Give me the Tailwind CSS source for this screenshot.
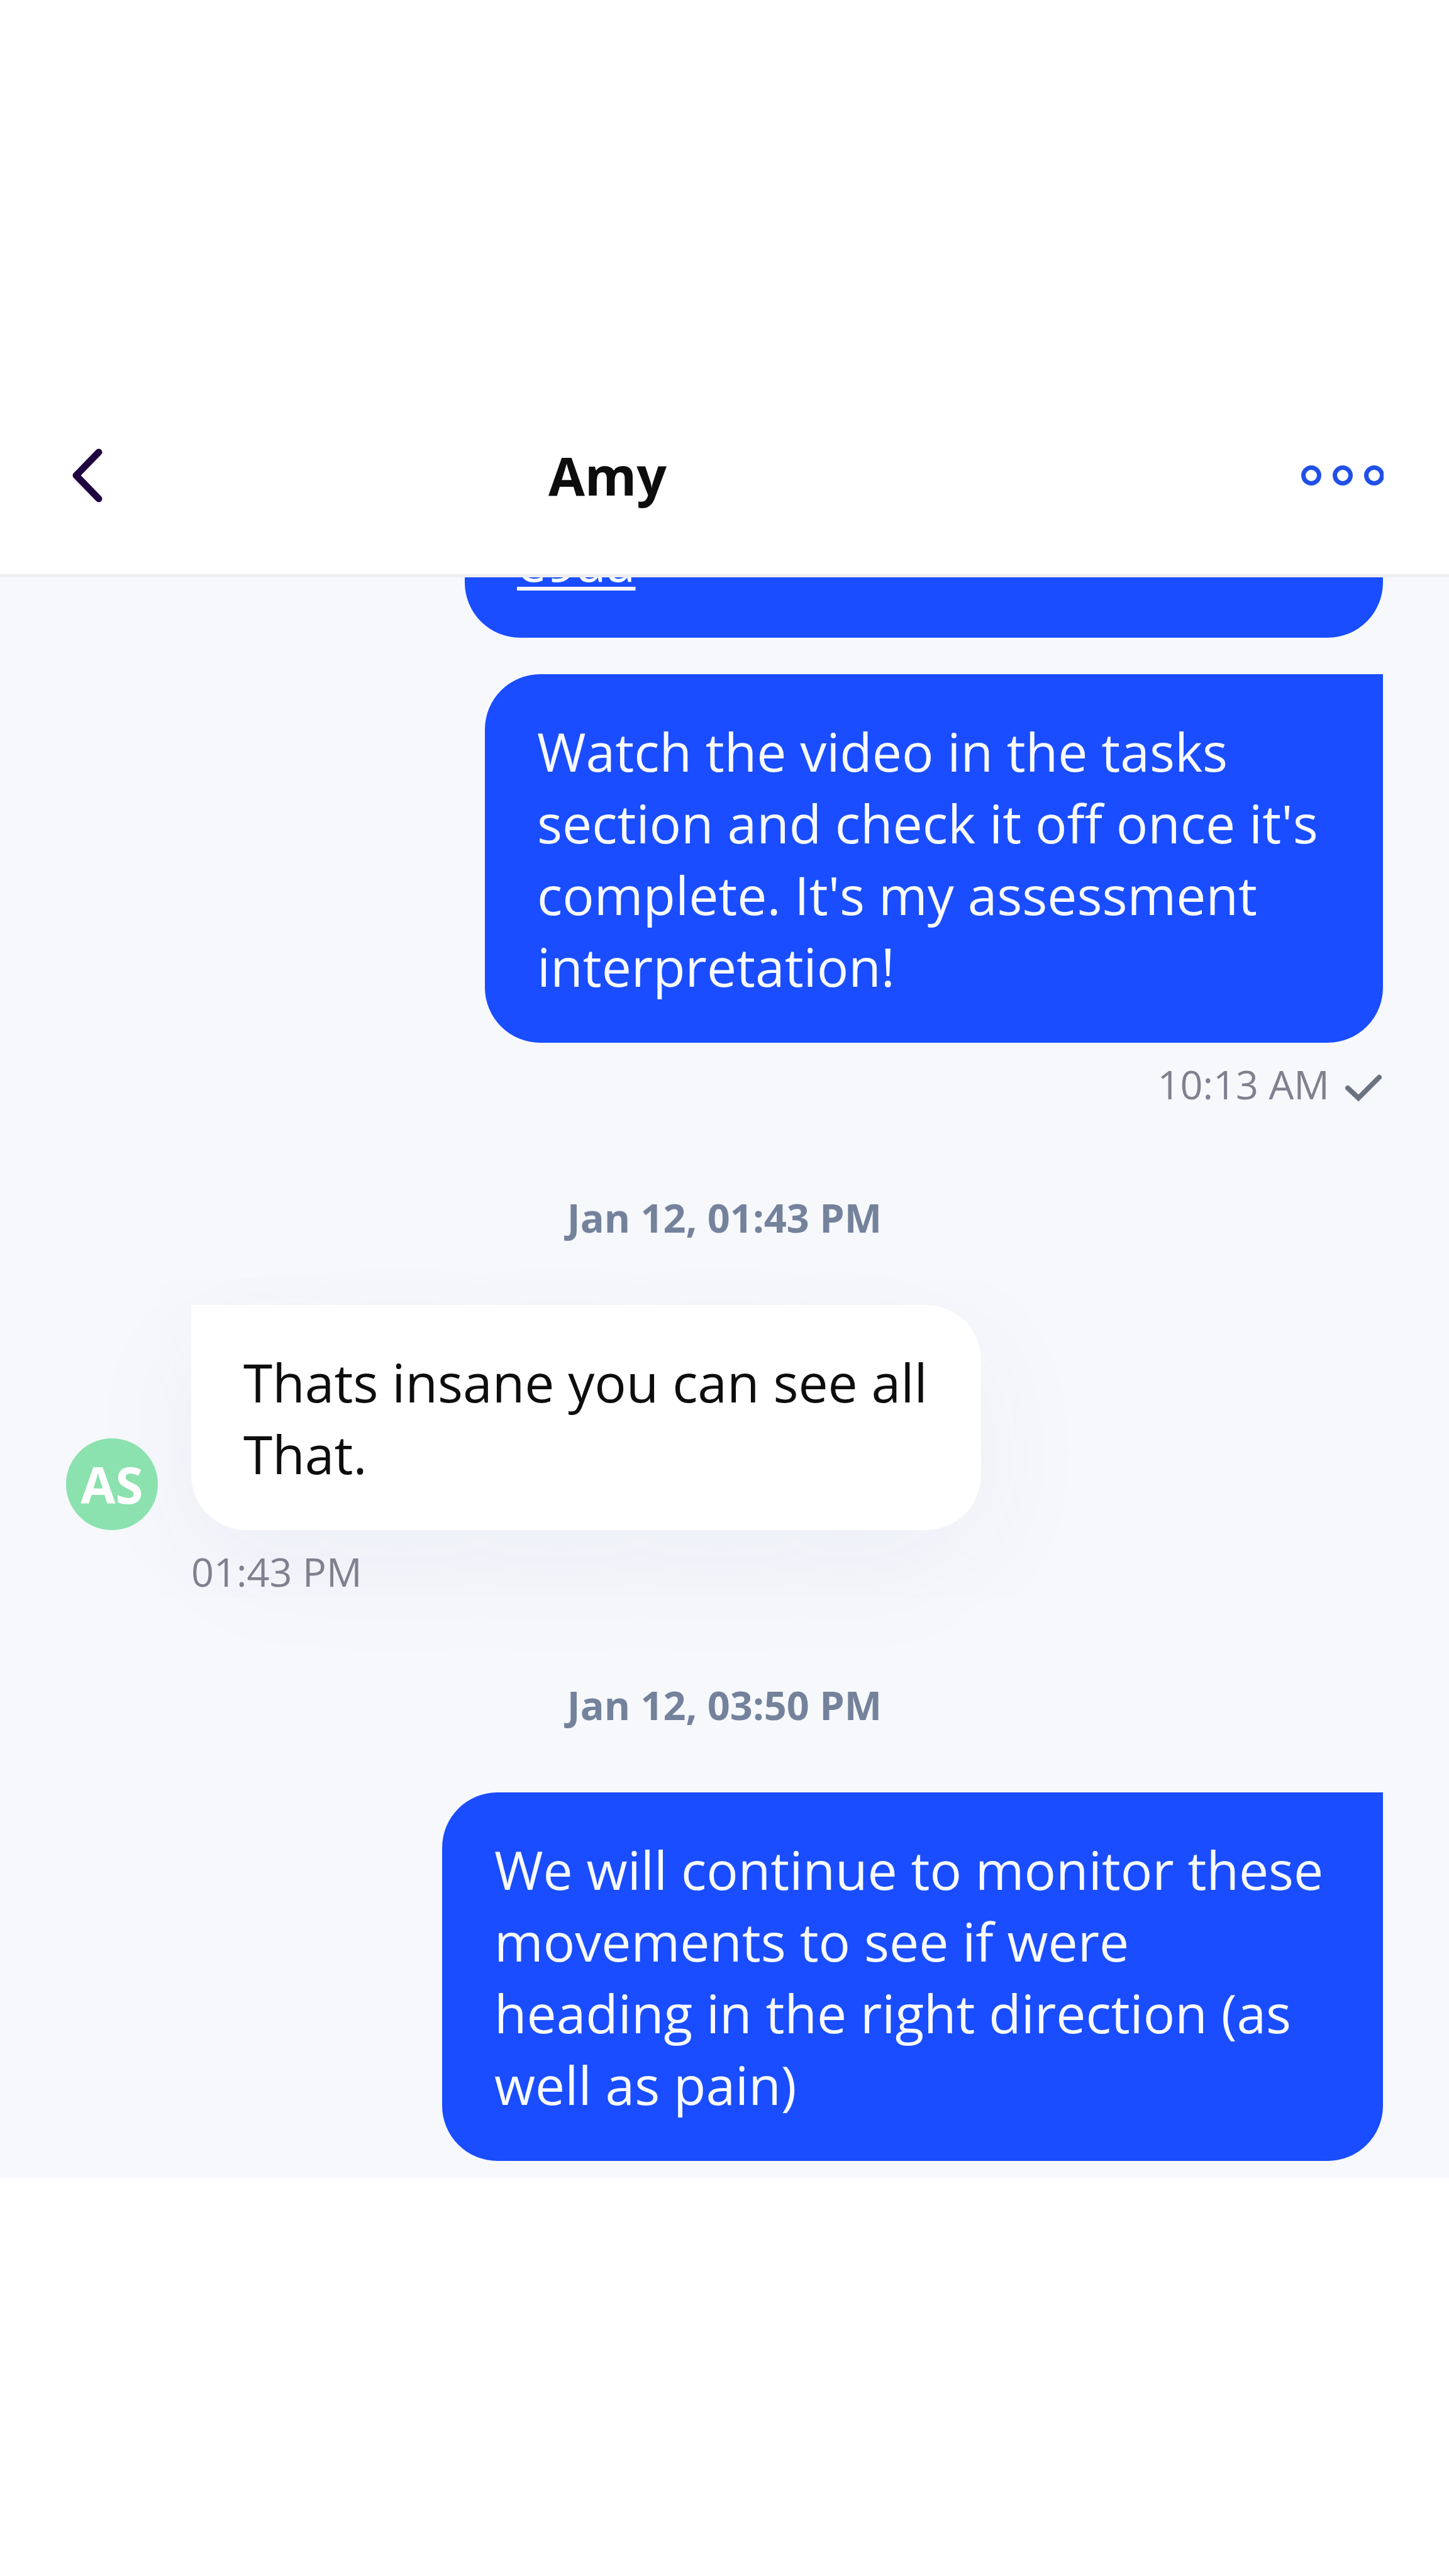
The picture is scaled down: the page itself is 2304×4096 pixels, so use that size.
<!DOCTYPE html>
<html lang="en">
<head>
    <meta charset="UTF-8">
    <meta name="viewport" content="width=device-width, initial-scale=1.0">
    <title>Amy</title>
    <script src="https://cdn.jsdelivr.net/npm/@tailwindcss/browser@4"></script>
</head>
<body class="flex min-h-screen flex-col bg-white pt-[598px] pb-[633px] font-['Open_Sans',sans-serif] text-[84px] leading-[114px] text-[#0d0d0d]">

    <!-- Header -->
    <header class="flex h-80 shrink-0 items-center border-b-5 border-[#eeeeef] px-[104px]">
        <button type="button" aria-label="Back">
            <svg class="h-[100px] w-[72px]" viewBox="0 0 72 100" fill="none" stroke="#1f0440" stroke-width="11" stroke-linecap="round" stroke-linejoin="round">
                <path d="M53 13 17 50l36 37"/>
            </svg>
        </button>
        <h1 class="grow text-center font-bold">Amy</h1>
        <button type="button" aria-label="More options" class="flex w-[444px] justify-end">
            <svg class="h-[34px] w-[131px]" viewBox="0 0 131 34" fill="none" stroke="#2050e8" stroke-width="7">
                <circle cx="16" cy="17" r="12.5"/>
                <circle cx="66" cy="17" r="12.5"/>
                <circle cx="116" cy="17" r="12.5"/>
            </svg>
        </button>
    </header>

    <!-- Conversation -->
    <main class="flex grow flex-col overflow-hidden bg-[#f6f8fc] px-[105px]">

        <!-- Scrolled partly under the header -->
        <div class="flex h-[96px] flex-col items-end justify-end">
            <div class="w-[1460px] rounded-[88px] bg-[#194dff] px-[83px] pt-[66px] pb-16 text-[#f8faff]">
                <a href="#" class="underline decoration-6 underline-offset-8">e9aa</a>
            </div>
        </div>

        <div class="mt-[58px] flex flex-col items-end">
            <p class="w-[1428px] rounded-[88px] rounded-tr-none bg-[#194dff] px-[83px] pt-[66px] pb-16 text-[#f8faff]">Watch the video in the tasks section and check it off once it's complete. It's my assessment interpretation!</p>
            <div class="mt-[22px] flex items-center gap-[23px] text-[63px] leading-[88px] text-[#80808f]">
                <time>10:13 AM</time>
                <svg class="h-[56px] w-[62px]" viewBox="0 0 62 56" fill="none" stroke="#6b7280" stroke-width="8" stroke-linecap="round" stroke-linejoin="miter" role="img" aria-label="Sent">
                    <path d="M6 34 23 50 56 17"/>
                </svg>
            </div>
        </div>

        <h2 class="mt-[124px] text-center text-[63px] leading-[88px] font-bold text-[#74829c]">Jan 12, 01:43 PM</h2>

        <div class="mt-[95px] grid grid-cols-[146px_auto] items-end justify-start gap-x-[53px]">
            <div class="relative z-10 flex size-[146px] items-center justify-center rounded-full bg-[#8be2ae] text-[80px] font-bold text-white">AS</div>
            <p class="w-[1256px] rounded-[88px] rounded-tl-none bg-white px-[83px] pt-[66px] pb-16 shadow-[0_52px_200px_rgba(80,70,150,0.06)]">Thats insane you can see all That.</p>
            <time class="relative col-start-2 mt-[22px] text-[63px] leading-[88px] text-[#80808f]">01:43 PM</time>
        </div>

        <h2 class="mt-[124px] text-center text-[63px] leading-[88px] font-bold text-[#74829c]">Jan 12, 03:50 PM</h2>

        <div class="mt-[95px] flex flex-col items-end">
            <p class="w-[1496px] rounded-[88px] rounded-tr-none bg-[#194dff] px-[83px] pt-[66px] pb-16 text-[#f8faff]">We will continue to monitor these movements to see if were heading in the right direction (as well as pain)</p>
        </div>
    </main>

</body>
</html>
